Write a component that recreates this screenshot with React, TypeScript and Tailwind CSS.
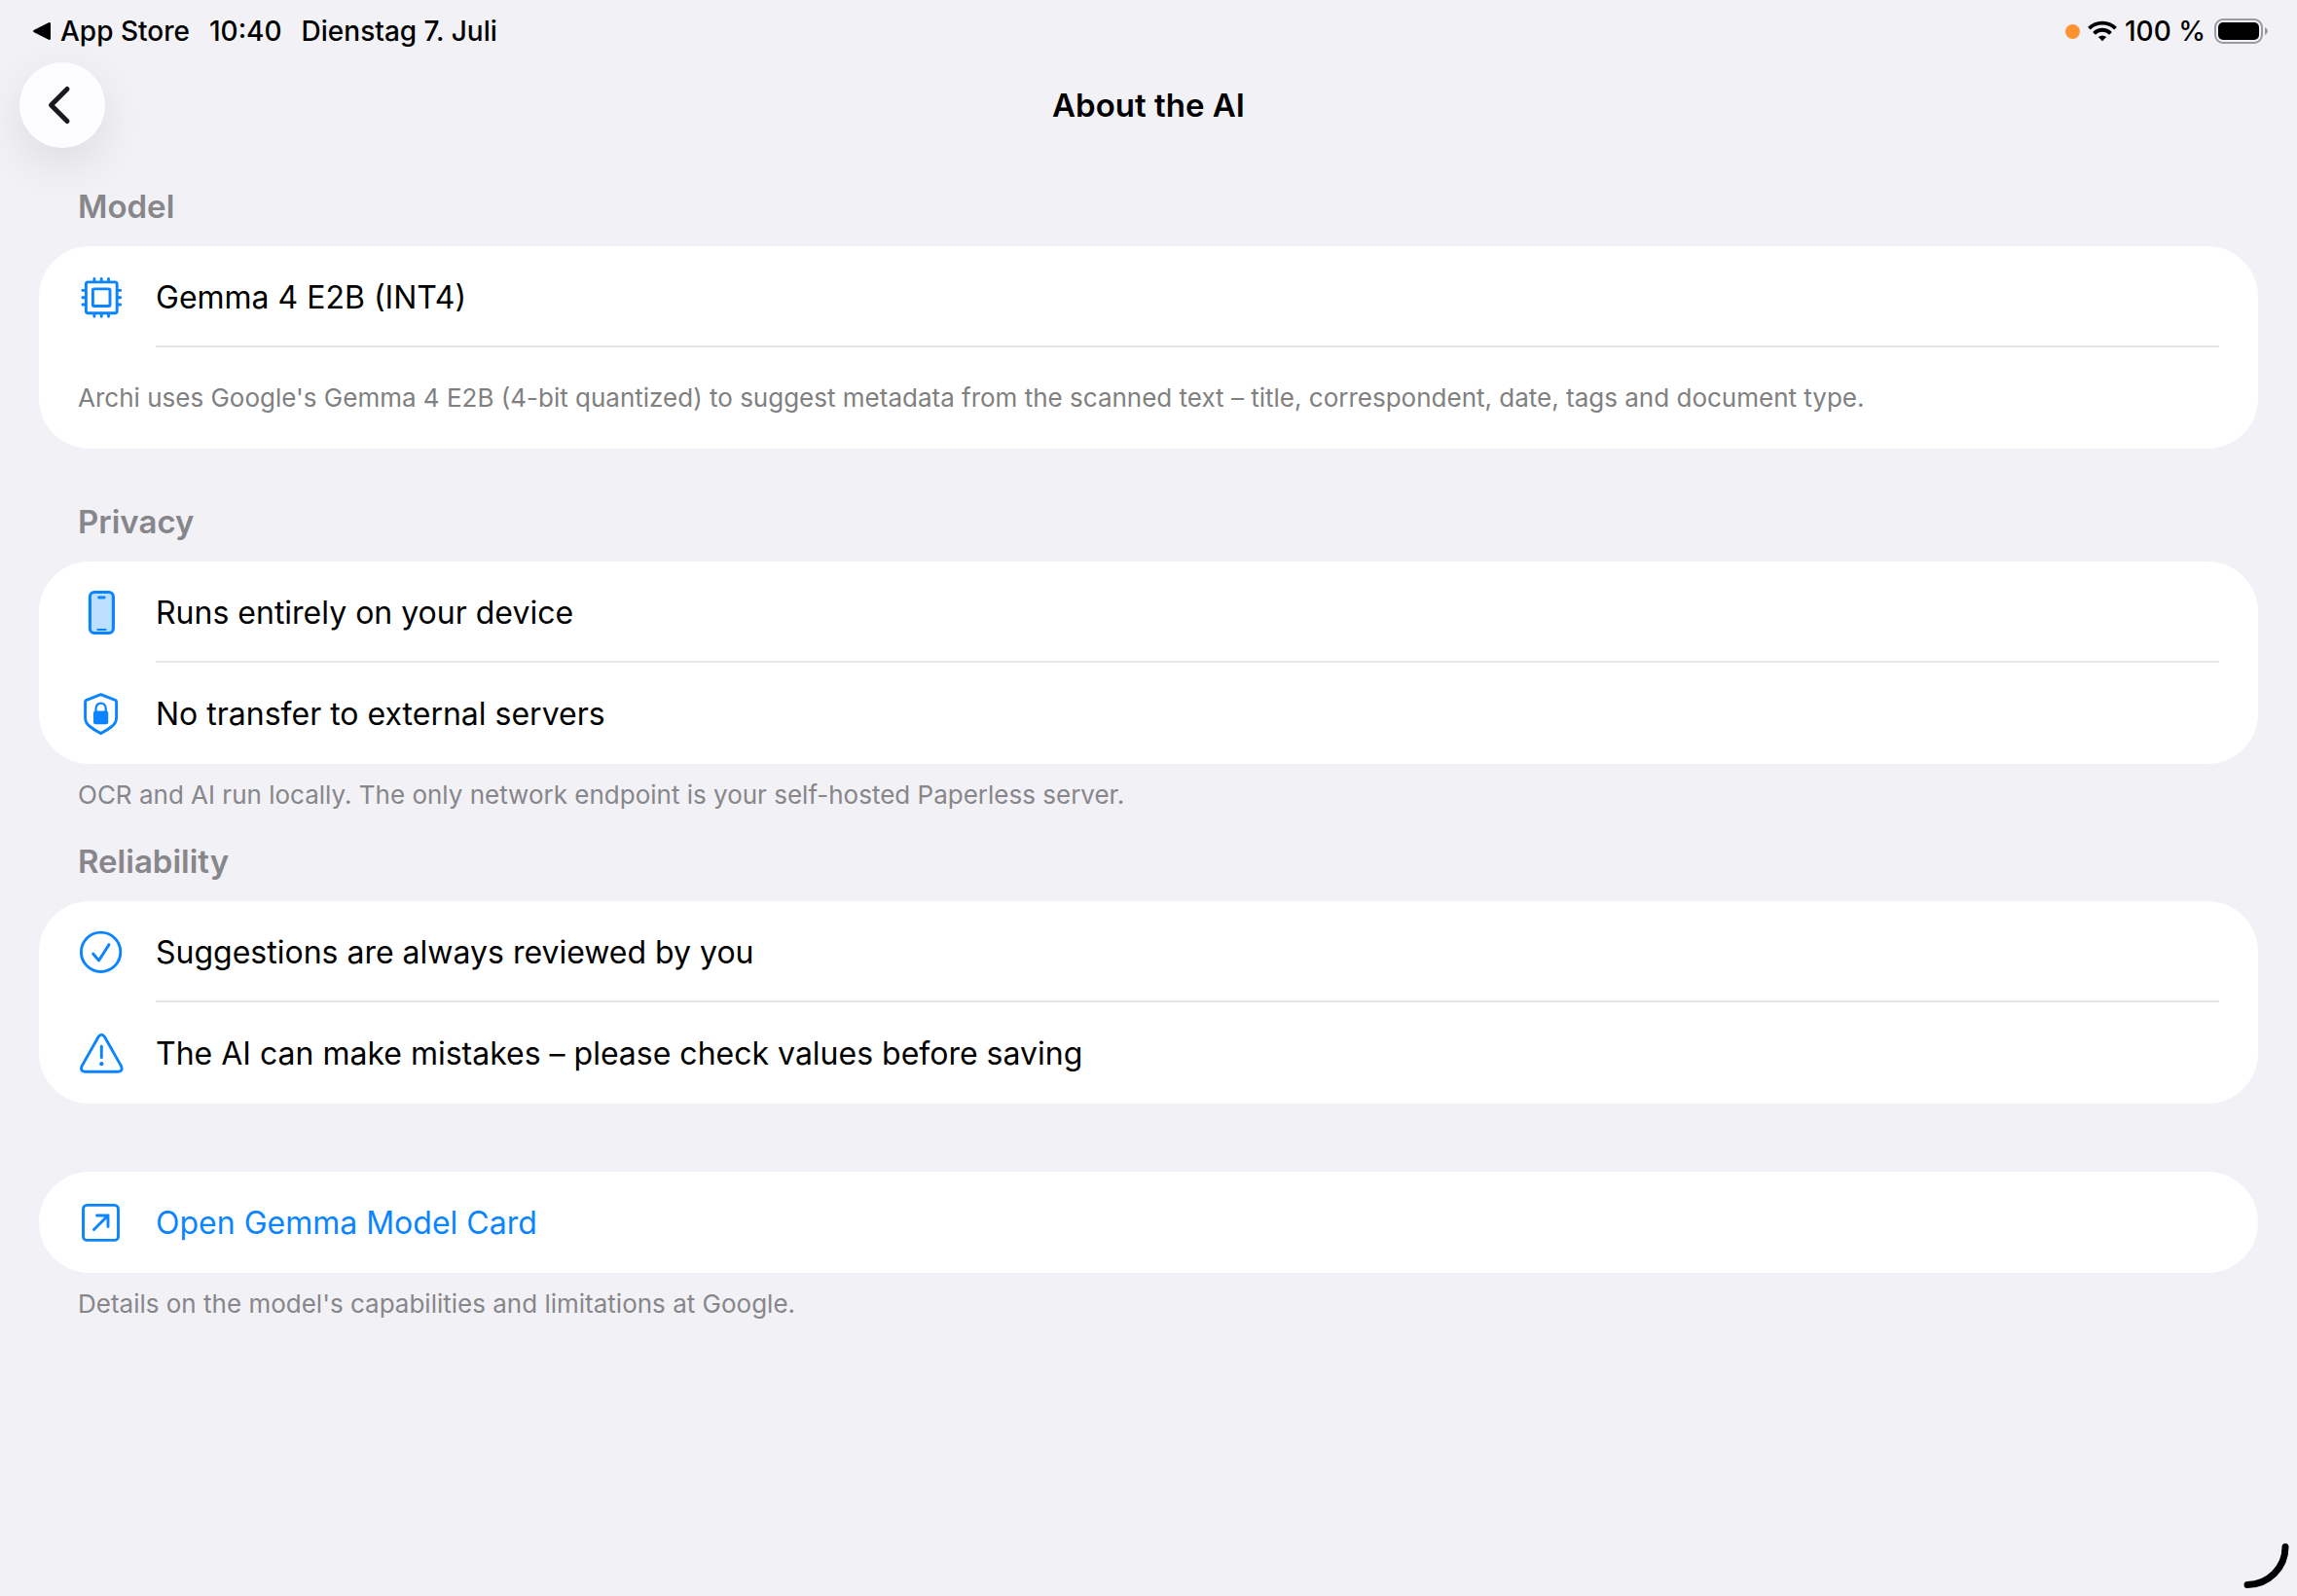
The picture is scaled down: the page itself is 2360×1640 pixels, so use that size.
import type { ReactNode } from "react";

function Cpu() {
  return (
    <svg width="48" height="48" viewBox="0 0 48 48" fill="none" stroke="currentColor" strokeWidth="2.9" strokeLinecap="round" strokeLinejoin="round">
      <rect x="8.4" y="8.9" width="31.8" height="31.8" rx="2" />
      <rect x="15.4" y="15.9" width="17.6" height="17.6" rx="1.2" />
      <path d="M16.9 7.6V5.4M24.2 7.6V5.4M31.5 7.6V5.4M16.9 44.2V42M24.2 44.2V42M31.5 44.2V42M7.1 17.4H4.9M7.1 24.7H4.9M7.1 32H4.9M43.7 17.4H41.5M43.7 24.7H41.5M43.7 32H41.5" />
    </svg>
  );
}

function Phone() {
  return (
    <svg width="48" height="48" viewBox="0 0 48 48" fill="none" stroke="currentColor" strokeLinecap="round">
      <rect x="12.4" y="3.5" width="24" height="42" rx="4.5" fill="#bddfff" strokeWidth="3.1" />
      <path d="M21.6 9H27.2" strokeWidth="2.8" />
      <path d="M20.3 42H28.7" strokeWidth="2" />
    </svg>
  );
}

function ShieldLock() {
  return (
    <svg width="48" height="48" viewBox="0 0 48 48" fill="none" stroke="currentColor" strokeWidth="2.9" strokeLinejoin="round">
      <path d="M23.6 4.6 38.3 10.3Q39.6 10.9 39.6 12.2V28.5Q39.6 33.5 35.5 37 30 41.4 23.6 44.6 17.2 41.4 11.7 37 7.6 33.5 7.6 28.5V12.2Q7.6 10.9 8.9 10.3Z" />
      <path d="M18.5 23V19.2C18.5 15.8 20.7 13.6 23.6 13.6S28.7 15.8 28.7 19.2V23" strokeWidth="2.3" />
      <rect x="16" y="21.6" width="15.2" height="13.6" rx="2" fill="currentColor" stroke="none" />
    </svg>
  );
}

function CheckCircle() {
  return (
    <svg width="48" height="48" viewBox="0 0 48 48" fill="none" stroke="currentColor" strokeWidth="2.9" strokeLinecap="round" strokeLinejoin="round">
      <circle cx="23.6" cy="24.3" r="20.2" />
      <path d="M15.6 26 21.6 33L32 16.6" />
    </svg>
  );
}

function Warning() {
  return (
    <svg width="48" height="48" viewBox="0 0 48 48" fill="none" stroke="currentColor" strokeWidth="2.9" strokeLinecap="round" strokeLinejoin="round">
      <path d="M21.2 7.3Q24.3 3.2 27.4 7.3L44.6 37.6Q46.6 43 41.2 43.3H7.4Q2 43 4 37.6Z" />
      <path d="M24.3 17.2V28.8" />
      <circle cx="24.3" cy="35.2" r="2.1" fill="currentColor" stroke="none" />
    </svg>
  );
}

function ArrowSquare() {
  return (
    <svg width="48" height="48" viewBox="0 0 48 48" fill="none" stroke="currentColor" strokeWidth="2.9" strokeLinecap="round" strokeLinejoin="round">
      <rect x="5.5" y="6.4" width="36" height="36" rx="4" />
      <path d="M16.5 31.5 31 17M19.5 17H31V28.6" />
    </svg>
  );
}

function Row({ icon, children }: { icon: ReactNode; children: ReactNode }) {
  return (
    <div className="flex h-[104px] items-center gap-8 px-10 text-[32px] leading-10 text-black">
      <span className="flex w-12 shrink-0 text-[#0a84ff]">{icon}</span>
      <span className="pt-0.5">{children}</span>
    </div>
  );
}

function Divider() {
  return <div className="-mt-0.5 mr-10 ml-30 h-0.5 bg-[#e6e6e6]" />;
}

function Card({ children }: { children: ReactNode }) {
  return <div className="rounded-[52px] bg-white">{children}</div>;
}

function Heading({ children }: { children: ReactNode }) {
  return <h2 className="mb-[21px] px-10 text-[33px] leading-10 font-semibold text-[#86868b]">{children}</h2>;
}

function Note({ children }: { children: ReactNode }) {
  return <p className="mt-4 px-10 text-[26px] leading-8 text-[#86868b]">{children}</p>;
}

export default function App() {
  return (
    <div className="relative min-h-screen bg-[#f2f1f6] font-['Inter',sans-serif] text-black">
      <div className="flex h-16 items-center justify-between px-[30px] text-[28px] leading-8 font-medium">
        <div className="flex items-center gap-5">
          <button type="button" className="flex items-center gap-2">
            <svg width="24" height="20" viewBox="0 0 24 20" fill="currentColor">
              <path d="M4.6 9 20 1.2Q22 .4 22 2.4V17.6Q22 19.6 20 18.8L4.6 11Q3 10 4.6 9Z" />
            </svg>
            App Store
          </button>
          <span>10:40</span>
          <span>Dienstag 7. Juli</span>
        </div>
        <div className="flex items-center gap-2">
          <span className="size-[15px] rounded-full bg-[#ff9230]" />
          <svg width="30" height="22" viewBox="0 0 30 22" fill="none" stroke="currentColor" strokeWidth="3.8">
            <path d="M1.4 8.2a19.3 19.3 0 0 1 27.2 0" />
            <path d="M6.5 13.3a12 12 0 0 1 17 0" />
            <path d="M15 21.2l-4.2-4.1a6 6 0 0 1 8.4 0Z" fill="currentColor" stroke="none" />
          </svg>
          <span>100 %</span>
          <svg width="56" height="26" viewBox="0 0 56 26">
            <rect x="2" y="1" width="48" height="24" rx="8" fill="none" stroke="#9b9b9f" strokeWidth="2" />
            <rect x="5" y="4" width="42" height="18" rx="5" fill="currentColor" />
            <path d="M53 9q3 1.4 3 4t-3 4Z" fill="#9b9b9f" />
          </svg>
        </div>
      </div>

      <header className="grid grid-cols-[88px_1fr_88px] items-center px-5">
        <button type="button" aria-label="Back" className="flex size-[88px] items-center justify-center rounded-full bg-[#fdfdff] shadow-[0_16px_48px_rgba(0,0,0,0.09)]">
          <svg width="40" height="44" viewBox="0 0 40 44" fill="none" stroke="#1a1a1e" strokeWidth="5" strokeLinecap="round" strokeLinejoin="round">
            <path d="M25 5.5 8.5 22 25 38.5" />
          </svg>
        </button>
        <h1 className="text-center text-[33px] leading-10 font-semibold">About the AI</h1>
      </header>

      <main className="px-10 pt-10">
        <section>
          <Heading>Model</Heading>
          <Card>
            <Row icon={<Cpu />}>Gemma 4 E2B (INT4)</Row>
            <Divider />
            <p className="flex h-[104px] items-center px-10 text-[26px] leading-8 text-[#808080]">
              Archi uses Google's Gemma 4 E2B (4-bit quantized) to suggest metadata from the scanned text – title, correspondent, date, tags and document type.
            </p>
          </Card>
        </section>

        <section className="mt-[55px]">
          <Heading>Privacy</Heading>
          <Card>
            <Row icon={<Phone />}>Runs entirely on your device</Row>
            <Divider />
            <Row icon={<ShieldLock />}>No transfer to external servers</Row>
          </Card>
          <Note>OCR and AI run locally. The only network endpoint is your self-hosted Paperless server.</Note>
        </section>

        <section className="mt-8">
          <Heading>Reliability</Heading>
          <Card>
            <Row icon={<CheckCircle />}>Suggestions are always reviewed by you</Row>
            <Divider />
            <Row icon={<Warning />}>The AI can make mistakes – please check values before saving</Row>
          </Card>
        </section>

        <section className="mt-[70px]">
          <Card>
            <a href="#model-card" className="flex h-[104px] items-center gap-8 px-10 text-[32px] leading-10 text-[#0a84ff]">
              <span className="flex w-12 shrink-0">
                <ArrowSquare />
              </span>
              <span className="pt-0.5">Open Gemma Model Card</span>
            </a>
          </Card>
          <Note>Details on the model's capabilities and limitations at Google.</Note>
        </section>
      </main>

      <svg className="absolute right-2 bottom-2" width="48" height="48" viewBox="0 0 48 48" fill="none" stroke="#000" strokeWidth="7" strokeLinecap="round">
        <path d="M44 5.5A39 39 0 0 1 5 44.500" />
      </svg>
    </div>
  );
}
